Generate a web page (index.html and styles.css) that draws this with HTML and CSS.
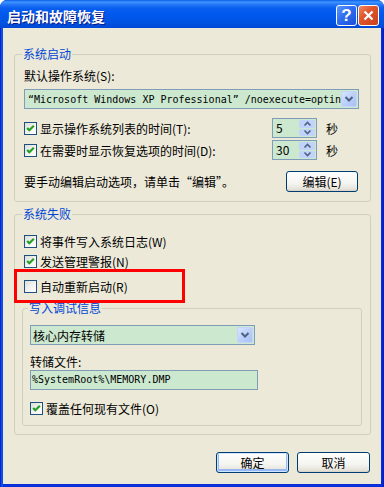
FILE: index.html
```html
<!DOCTYPE html>
<html lang="zh-CN">
<head>
    <meta charset="UTF-8">
    <meta name="viewport" content="width=device-width, initial-scale=1.0">
    <title>启动和故障恢复</title>
    <link rel="stylesheet" href="styles.css">
</head>
<body>
    <div class="window">
        <div class="titlebar">
            <span class="title">启动和故障恢复</span>
            <div class="captionBtns">
                <span class="capBtn help">?</span>
                <span class="capBtn close">
                    <svg width="11" height="11" viewBox="0 0 11 11"><path d="M1.5 1.5 L9.5 9.5 M9.5 1.5 L1.5 9.5" stroke="#fff" stroke-width="2.2" fill="none"/></svg>
                </span>
            </div>
        </div>

        <div class="client">
            <!-- 系统启动 -->
            <fieldset class="group startup">
                <legend>系统启动</legend>
                <div class="label first">默认操作系统(S):</div>
                <div class="combo osCombo">
                    <span class="comboText mono">“Microsoft Windows XP Professional” /noexecute=optin</span>
                    <span class="dropBtn">
                        <svg width="14" height="14" viewBox="0 0 14 14"><path d="M3.5 5 L7 8.5 L10.5 5" stroke="#4d6185" stroke-width="2" fill="none"/></svg>
                    </span>
                </div>

                <div class="row timeRow first">
                    <div class="check"><span class="box on"></span>显示操作系统列表的时间(T):</div>
                    <div class="spin"><span class="spinVal">5</span><span class="spinBtns"><span class="up"></span><span class="down"></span></span></div>
                    <span class="unit">秒</span>
                </div>
                <div class="row timeRow">
                    <div class="check"><span class="box on"></span>在需要时显示恢复选项的时间(D):</div>
                    <div class="spin"><span class="spinVal">30</span><span class="spinBtns"><span class="up"></span><span class="down"></span></span></div>
                    <span class="unit">秒</span>
                </div>

                <div class="row editRow">
                    <span>要手动编辑启动选项，请单击“编辑”。</span>
                    <button class="btn editBtn">编辑(E)</button>
                </div>
            </fieldset>

            <!-- 系统失败 -->
            <fieldset class="group failure">
                <legend>系统失败</legend>
                <div class="check line l1"><span class="box on"></span>将事件写入系统日志(W)</div>
                <div class="check line l2"><span class="box on"></span>发送管理警报(N)</div>
                <div class="check line l3"><span class="box"></span>自动重新启动(R)</div>

                <fieldset class="group debug">
                    <legend>写入调试信息</legend>
                    <div class="combo dumpCombo">
                        <span class="comboText">核心内存转储</span>
                        <span class="dropBtn">
                            <svg width="14" height="14" viewBox="0 0 14 14"><path d="M3.5 5 L7 8.5 L10.5 5" stroke="#4d6185" stroke-width="2" fill="none"/></svg>
                        </span>
                    </div>
                    <div class="label dumpLabel">转储文件:</div>
                    <div class="field mono">%SystemRoot%\MEMORY.DMP</div>
                    <div class="check line l4"><span class="box on"></span>覆盖任何现有文件(O)</div>
                </fieldset>
            </fieldset>

            <div class="actions">
                <button class="btn default">确定</button>
                <button class="btn">取消</button>
            </div>

            <div class="highlight"></div>
        </div>
    </div>
</body>
</html>
```

FILE: styles.css
```css
*{
    margin: 0;
    padding: 0;
    box-sizing: border-box;
}

body{
    background-color: #ffffff;
    font-family: "Noto Sans CJK SC", sans-serif;
    font-size: 12px;
    color: #000000;
}

.mono{
    font-family: "DejaVu Sans Mono", "Liberation Mono", monospace;
    font-size: 10px;
}

.window{
    width: 384px;
    height: 487px;
    display: flex;
    flex-direction: column;
    background: linear-gradient(to right, #0019cf 0, #0831d9 1px, #166aee 2px, #0831d9 3px, #0831d9 381px, #0019cf 384px);
    border-radius: 7px 7px 0 0;
    overflow: hidden;
}

.titlebar{
    height: 28px;
    display: flex;
    align-items: center;
    justify-content: space-between;
    padding: 2px 5px 0 7px;
    background: linear-gradient(to bottom, #0a5ce8 0, #3e95ff 2px, #2a7cf7 4px, #0a5fef 8px, #0058ee 14px, #0054e3 22px, #0048d6 28px);
}

.title{
    color: white;
    font-weight: 700;
    font-size: 14px;
    padding-top: 1px;
    text-shadow: 1px 1px 0 #0a1883;
}

.captionBtns{
    display: flex;
    gap: 1px;
}

.capBtn{
    width: 21px;
    height: 21px;
    border: 1px solid #ffffff;
    border-radius: 3px;
    display: flex;
    justify-content: center;
    align-items: center;
}

.help{
    background: linear-gradient(135deg, #5b97ff 0, #2f6ef0 45%, #1a4fd6 100%);
    color: white;
    font-family: "Liberation Sans", sans-serif;
    font-weight: 700;
    font-size: 17px;
    line-height: 1;
}

.close{
    background: linear-gradient(135deg, #f08a64 0, #e0552c 40%, #c8401a 100%);
}

.client{
    flex: 1;
    position: relative;
    margin: 0 3px 3px 3px;
    padding-top: 18px;
    background-color: #ece9d8;
}

.group{
    border: 1px solid #d0d0bf;
    border-radius: 3px;
    margin: 0 10px 0 11px;
    padding: 0 11px 9px 9px;
}

.group legend{
    color: #0046d5;
    line-height: 16px;
    padding: 0 1px;
    margin-left: -2px;
}

.label{
    line-height: 14px;
}

.label.first{
    margin-top: 7px;
}

.combo{
    height: 20px;
    display: flex;
    align-items: center;
    justify-content: space-between;
    border: 1px solid #7f9db9;
    background-color: #cce8cf;
    padding: 1px;
}

.comboText{
    padding-left: 2px;
    white-space: nowrap;
    overflow: hidden;
}

.osCombo{
    margin-top: 6px;
}

.dropBtn{
    width: 16px;
    height: 16px;
    flex-shrink: 0;
    display: flex;
    justify-content: center;
    align-items: center;
    border-radius: 2px;
    background: linear-gradient(135deg, #d9e5fd 0, #bcd0fa 50%, #a8c0f4 100%);
    border: 1px solid #c4d4fa;
}

.row{
    display: flex;
    align-items: center;
}

.timeRow{
    height: 20px;
    margin-top: 2px;
}

.timeRow.first{
    margin-top: 9px;
}

.check{
    display: flex;
    align-items: center;
    height: 16px;
    white-space: nowrap;
}

.timeRow .check{
    flex: 1;
}

.box{
    width: 13px;
    height: 13px;
    margin-right: 3px;
    border: 1px solid #1c5180;
    background: linear-gradient(135deg, #dcdcd7 0, #f5f5f3 60%, #ffffff 100%);
    flex-shrink: 0;
}

.box.on{
    background: url("data:image/svg+xml,%3Csvg xmlns='http://www.w3.org/2000/svg' width='11' height='11'%3E%3Cpath d='M2.2 5 L4.3 7.2 L8.8 2.7' stroke='%2321a121' stroke-width='2.2' fill='none'/%3E%3C/svg%3E") no-repeat center, linear-gradient(135deg, #dcdcd7 0, #f5f5f3 60%, #ffffff 100%);
}

.spin{
    width: 45px;
    height: 20px;
    display: flex;
    justify-content: space-between;
    border: 1px solid #7f9db9;
    background-color: #cce8cf;
    padding: 1px;
}

.spinVal{
    line-height: 16px;
    padding-left: 2px;
}

.spinBtns{
    width: 16px;
    display: flex;
    flex-direction: column;
    gap: 1px;
}

.spinBtns span{
    flex: 1;
    border-radius: 2px;
    background-color: #c1d3fb;
    background-repeat: no-repeat;
    background-position: center;
}

.spinBtns .up{
    background-image: url("data:image/svg+xml,%3Csvg xmlns='http://www.w3.org/2000/svg' width='9' height='6'%3E%3Cpath d='M1.5 4.5 L4.5 1.5 L7.5 4.5' stroke='%234d6185' stroke-width='1.6' fill='none'/%3E%3C/svg%3E");
}

.spinBtns .down{
    background-image: url("data:image/svg+xml,%3Csvg xmlns='http://www.w3.org/2000/svg' width='9' height='6'%3E%3Cpath d='M1.5 1.5 L4.5 4.5 L7.5 1.5' stroke='%234d6185' stroke-width='1.6' fill='none'/%3E%3C/svg%3E");
}

.unit{
    margin-left: 9px;
    margin-right: 21px;
}

.editRow{
    margin-top: 11px;
    justify-content: space-between;
}

.btn{
    width: 73px;
    height: 21px;
    border: 1px solid #003c74;
    border-radius: 3px;
    background: linear-gradient(to bottom, #ffffff 0, #f4f4f0 60%, #e6e3d9 90%, #d6d0c5 100%);
    font-family: "Noto Sans CJK SC", sans-serif;
    font-size: 12px;
    color: #000000;
}

.editBtn{
    width: 72px;
    margin-right: 1px;
}

.btn.default{
    box-shadow: inset 0 0 0 1px #cee7ff, inset 0 -1px 0 2px #98b8f3;
}

.failure{
    margin-top: 4px;
    padding-bottom: 8px;
}

.line.l1{
    margin-top: 11px;
}

.line.l2{
    margin-top: 4px;
}

.line.l3{
    margin-top: 9px;
}

.debug{
    margin: 6px -3px 0 -2px;
    padding: 0 10px 9px 7px;
}

.dumpCombo{
    width: 225px;
    margin-top: 9px;
}

.dumpCombo .comboText{
    padding-left: 1px;
}

.dumpLabel{
    margin-top: 10px;
}

.field{
    width: 228px;
    height: 20px;
    margin-top: 1px;
    border: 1px solid #7f9db9;
    background-color: #cce8cf;
    padding-left: 1px;
    line-height: 18px;
}

.line.l4{
    margin-top: 10px;
}

.actions{
    display: flex;
    justify-content: flex-end;
    gap: 8px;
    margin-top: 17px;
    padding-right: 11px;
}

.highlight{
    position: absolute;
    left: 11px;
    top: 241px;
    width: 171px;
    height: 34px;
    border: 3px solid #ff0000;
}
```
